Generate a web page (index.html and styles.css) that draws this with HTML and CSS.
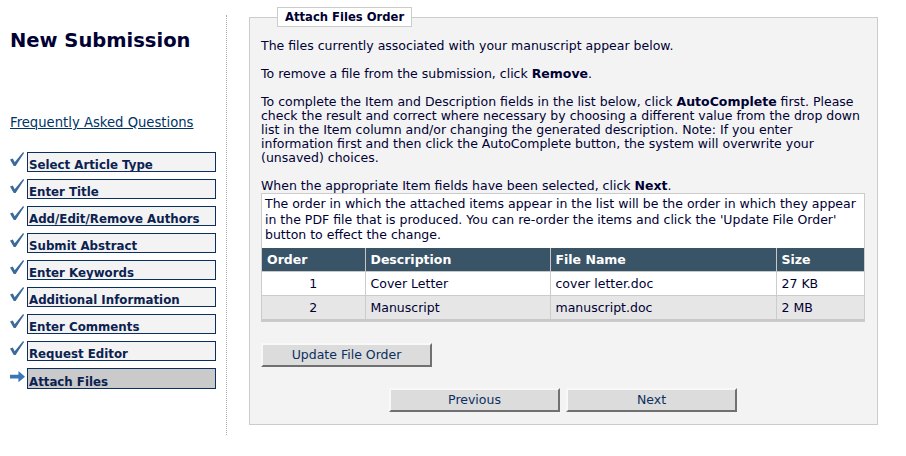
FILE: index.html
```html
<!doctype html>
<html lang="en">

<head>
    <meta charset="utf-8">
    <title>New Submission - Attach Files</title>
    <link rel="stylesheet" href="styles.css">
</head>

<body>
    <div class="page">
        <div class="sidebar">
            <h1>New Submission</h1>
            <a class="faq" href="#">Frequently Asked Questions</a>
            <ul class="steps">
                <li class="done"><svg class="icon" viewBox="0 0 16 16"><path d="M0 8 L3 7 L5 11 L14 0 L15 1 L6 15 L4 15 Z"/></svg><span class="step">Select Article Type</span></li>
                <li class="done"><svg class="icon" viewBox="0 0 16 16"><path d="M0 8 L3 7 L5 11 L14 0 L15 1 L6 15 L4 15 Z"/></svg><span class="step">Enter Title</span></li>
                <li class="done"><svg class="icon" viewBox="0 0 16 16"><path d="M0 8 L3 7 L5 11 L14 0 L15 1 L6 15 L4 15 Z"/></svg><span class="step">Add/Edit/Remove Authors</span></li>
                <li class="done"><svg class="icon" viewBox="0 0 16 16"><path d="M0 8 L3 7 L5 11 L14 0 L15 1 L6 15 L4 15 Z"/></svg><span class="step">Submit Abstract</span></li>
                <li class="done"><svg class="icon" viewBox="0 0 16 16"><path d="M0 8 L3 7 L5 11 L14 0 L15 1 L6 15 L4 15 Z"/></svg><span class="step">Enter Keywords</span></li>
                <li class="done"><svg class="icon" viewBox="0 0 16 16"><path d="M0 8 L3 7 L5 11 L14 0 L15 1 L6 15 L4 15 Z"/></svg><span class="step">Additional Information</span></li>
                <li class="done"><svg class="icon" viewBox="0 0 16 16"><path d="M0 8 L3 7 L5 11 L14 0 L15 1 L6 15 L4 15 Z"/></svg><span class="step">Enter Comments</span></li>
                <li class="done"><svg class="icon" viewBox="0 0 16 16"><path d="M0 8 L3 7 L5 11 L14 0 L15 1 L6 15 L4 15 Z"/></svg><span class="step">Request Editor</span></li>
                <li class="current"><svg class="icon arrow" viewBox="0 0 16 16"><path d="M0 4 H9 V0 L16 6 L9 12 V8 H0 Z"/></svg><span class="step">Attach Files</span></li>
            </ul>
        </div>

        <div class="main">
            <fieldset class="panel">
                <legend>Attach Files Order</legend>
                <p>The files currently associated with your manuscript appear below.</p>
                <p>To remove a file from the submission, click <b>Remove</b>.</p>
                <p>To complete the Item and Description fields in the list below, click <b>AutoComplete</b> first. Please check the result and correct where necessary by choosing a different value from the drop down list in the Item column and/or changing the generated description. Note: If you enter information first and then click the AutoComplete button, the system will overwrite your (unsaved) choices.</p>
                <p class="tight">When the appropriate Item fields have been selected, click <b>Next</b>.</p>

                <div class="files">
                    <div class="files-note">The order in which the attached items appear in the list will be the order in which they appear in the PDF file that is produced. You can re-order the items and click the 'Update File Order' button to effect the change.</div>
                    <table>
                        <thead>
                            <tr>
                                <th class="c-order">Order</th>
                                <th class="c-desc">Description</th>
                                <th class="c-name">File Name</th>
                                <th>Size</th>
                            </tr>
                        </thead>
                        <tbody>
                            <tr>
                                <td class="num">1</td>
                                <td>Cover Letter</td>
                                <td>cover letter.doc</td>
                                <td>27 KB</td>
                            </tr>
                            <tr class="alt">
                                <td class="num">2</td>
                                <td>Manuscript</td>
                                <td>manuscript.doc</td>
                                <td>2 MB</td>
                            </tr>
                        </tbody>
                    </table>
                </div>

                <div class="update-row">
                    <button type="button" class="btn">Update File Order</button>
                </div>

                <div class="nav-row">
                    <button type="button" class="btn">Previous</button>
                    <button type="button" class="btn">Next</button>
                </div>
            </fieldset>
        </div>
    </div>
</body>

</html>
```

FILE: styles.css
```css
/* Submission wizard - attach files step */
html, body {
    margin: 0;
    padding: 0;
    background: #ffffff;
    font-family: 'DejaVu Sans', 'Verdana', sans-serif;
    font-size: 12.5px;
    color: #000033;
}

.page {
    display: flex;
    align-items: flex-start;
}

/* Left column */
.sidebar {
    width: 216px;
    margin-top: 15px;
    height: 420px;
    padding-left: 10px;
    border-right: 1px dotted #b0b0b0;
}

.sidebar h1 {
    font-size: 19.5px;
    font-weight: bold;
    margin: 14px 0 0 0;
    color: #000033;
}

.faq {
    display: block;
    margin-top: 63px;
    font-size: 13.2px;
    color: #003366;
}

.steps {
    list-style: none;
    margin: 22px 0 0 0;
    padding: 0;
}

.steps li {
    display: flex;
    align-items: flex-start;
    margin-bottom: 7px;
}

.icon {
    width: 15px;
    height: 15px;
    margin-top: 0;
    margin-right: 2px;
    fill: #3b6a9a;
}

.icon.arrow {
    fill: #3b75b7;
    margin-top: 3px;
}

.step {
    display: block;
    width: 189px;
    height: 20px;
    box-sizing: border-box;
    padding: 5px 0 0 1px;
    border: 1px solid #0b2f5e;
    background: #f3f3f3;
    font-weight: bold;
    font-size: 11.8px;
    line-height: 15px;
    color: #0b2250;
    overflow: hidden;
}

.current .step {
    height: 21px;
    padding-top: 6px;
    background: #cacaca;
}

/* Right column */
.main {
    padding-left: 22px;
}

.panel {
    width: 604px;
    margin: 7px 0 0 0;
    padding: 12px 12px 12px 11px;
    border: 1px solid #cccccc;
    background: #f3f3f3;
}

.panel legend {
    margin-left: 16px;
    padding: 2px 7px 2px 7px;
    border: 1px solid #cccccc;
    background: #ffffff;
    font-weight: bold;
    font-size: 11.6px;
}

.panel p {
    margin: 0 0 14px 0;
    line-height: 14px;
}

.panel p.tight { margin-bottom: 0; }

.files {
    border: 1px solid #cccccc;
    background: #ffffff;
}

.files-note {
    padding: 2px 3px 5px 3px;
    line-height: 15.5px;
}

table {
    width: 100%;
    border-collapse: collapse;
    font-size: 12.5px;
}

th {
    background: #3a5467;
    color: #ffffff;
    text-align: left;
    font-weight: bold;
    height: 24px;
    padding: 0 5px;
    border: 1px solid #c8c8c8;
    border-top: 0;
    box-sizing: border-box;
}

td {
    height: 24px;
    padding: 0 5px;
    border: 1px solid #cccccc;
    background: #ffffff;
    box-sizing: border-box;
}

tr.alt td { background: #e6e6e6; }

th:first-child, td:first-child { border-left: 0; }
th:last-child, td:last-child { border-right: 0; }
tbody tr:last-child td { border-bottom: 2px solid #c8c8c8; }

.c-order { width: 103px; }
.c-desc { width: 185px; }
.c-name { width: 226px; }

td.num { text-align: center; }

.btn {
    background: #dcdcdc;
    border: 2px solid;
    border-color: #f8f8f8 #707070 #707070 #f8f8f8;
    color: #0b2f5e;
    font-family: 'DejaVu Sans', 'Verdana', sans-serif;
    font-size: 12.5px;
    height: 24px;
    width: 171px;
    padding: 0;
    cursor: pointer;
}

.update-row {
    margin-top: 21px;
}

.nav-row {
    display: flex;
    justify-content: center;
    gap: 6px;
    margin-top: 21px;
}
```
